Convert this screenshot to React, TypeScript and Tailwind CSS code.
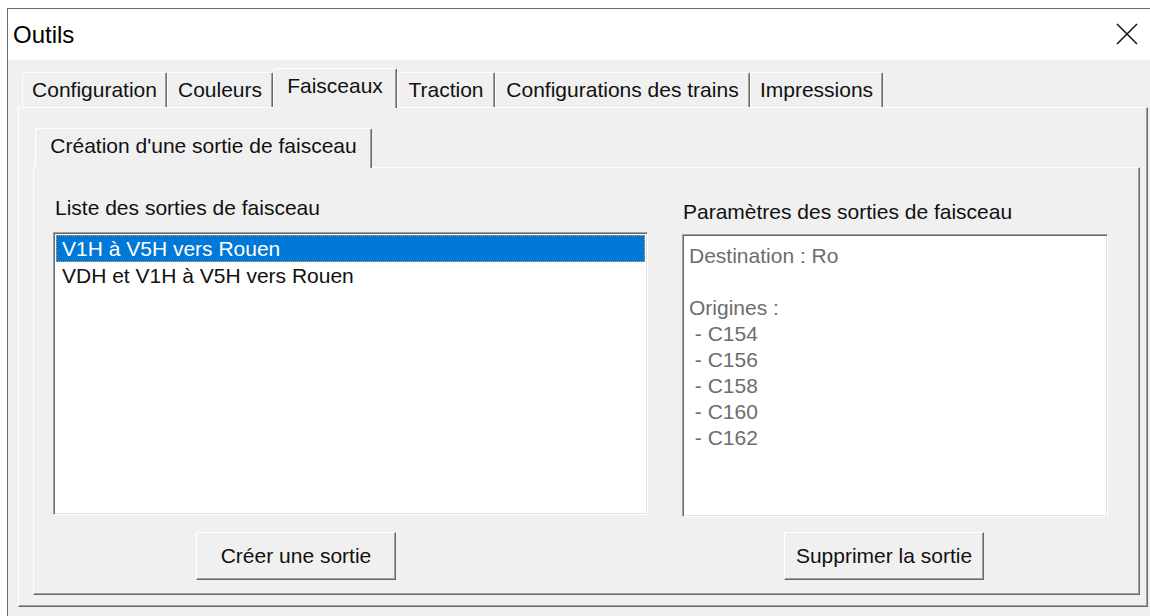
import React from 'react';
import clsx from 'clsx';

interface TabInfo {
  label: string;
  width: string;
  active?: boolean;
}

const tabs: TabInfo[] = [
  { label: 'Configuration', width: 'w-[145px]' },
  { label: 'Couleurs', width: 'w-[106px]' },
  { label: 'Faisceaux', width: 'w-[124px]', active: true },
  { label: 'Traction', width: 'w-[98px]' },
  { label: 'Configurations des trains', width: 'w-[255px]' },
  { label: 'Impressions', width: 'w-[133px]' },
];

const sorties = ['V1H à V5H vers Rouen', 'VDH et V1H à V5H vers Rouen'];

const parametres = ['Destination : Ro', '\u00a0', 'Origines :', ' - C154', ' - C156', ' - C158', ' - C160', ' - C162'];

// classic raised / sunken 3D edges
const raised =
  'border border-t-white border-l-white border-r-[#696969] border-b-[#696969] shadow-[inset_-1px_-1px_#a0a0a0]';
const sunken =
  'border border-t-[#a0a0a0] border-l-[#a0a0a0] border-r-white border-b-white shadow-[inset_1px_1px_#696969,inset_-1px_-1px_#e3e3e3]';

const Tab = ({ label, width, active }: TabInfo) => (
  <div
    className={clsx(
      width,
      'flex justify-center pt-[5px] text-[21px] leading-[24px] text-[#111] border-t border-l border-r border-t-white border-l-white border-r-[#696969] shadow-[inset_-1px_0_#a0a0a0] rounded-t-[2px]',
      active ? 'h-[40px] -mb-px relative z-10 bg-[#f0f0f0]' : 'h-[35px]'
    )}
  >
    {label}
  </div>
);

const Button = ({ label, offset }: { label: string; offset: string }) => (
  <button
    className={clsx(
      raised,
      offset,
      'w-[200px] h-[48px] bg-[#f0f0f0] text-[21px] leading-[24px] text-[#111] flex items-center justify-center'
    )}
  >
    {label}
  </button>
);

export default function App() {
  return (
    <div className="w-[1150px] h-[616px] bg-white pt-[8px] pl-[7px] overflow-hidden font-['Liberation_Sans',Arial,sans-serif]">
      <div className="h-full flex flex-col border-t border-l border-[#6b6b6b]">
        {/* Title bar */}
        <div className="h-[51px] shrink-0 flex items-center justify-between pl-[5px] pr-[12px] bg-white">
          <span className="text-[24px] leading-[28px] text-black">Outils</span>
          <svg width="22" height="22" viewBox="0 0 22 22" className="mt-[-2px]">
            <path d="M1 1 L21 21 M21 1 L1 21" stroke="#111" strokeWidth="1.5" fill="none" />
          </svg>
        </div>

        <div className="flex-1 bg-[#f0f0f0] pl-[10px] pt-[8px]">
          {/* Main tabs */}
          <div className="flex items-end h-[39px] pl-[4px]">
            {tabs.map(t => (
              <Tab key={t.label} {...t} />
            ))}
          </div>

          <div className={clsx(raised, 'w-[1130px] h-[500px] pt-[19px] pl-[14px] pr-[7px] pb-[11px] flex flex-col')}>
            {/* Sub tab */}
            <div className="flex items-end h-[40px] pl-[2px]">
              <Tab label="Création d'une sortie de faisceau" width="w-[337px]" active />
            </div>

            <div className={clsx(raised, 'flex-1 pl-[19px] grid grid-cols-[595px_426px] gap-x-[34px]')}>
              {/* Liste des sorties */}
              <div className="flex flex-col pt-[28px]">
                <div className="text-[21px] leading-[24px] text-[#111] pl-[2px]">Liste des sorties de faisceau</div>
                <div className={clsx(sunken, 'mt-[12px] h-[283px] bg-white p-[2px]')}>
                  {sorties.map((s, i) => (
                    <div
                      key={s}
                      className={clsx(
                        'h-[27px] pl-[5px] text-[21px] leading-[25px] whitespace-nowrap',
                        i === 0
                          ? 'bg-[#0078d7] text-white border border-dotted border-[#f59a3c]'
                          : 'text-[#111] border border-transparent'
                      )}
                    >
                      {s}
                    </div>
                  ))}
                </div>
                <div className="mt-[17px]">
                  <Button label="Créer une sortie" offset="ml-[143px]" />
                </div>
              </div>

              {/* Paramètres */}
              <div className="flex flex-col pt-[32px]">
                <div className="text-[21px] leading-[24px] text-[#111] pl-[1px]">Paramètres des sorties de faisceau</div>
                <div className={clsx(sunken, 'mt-[10px] h-[283px] bg-white pt-[8px] pl-[6px]')}>
                  {parametres.map((p, i) => (
                    <div key={i} className="text-[21px] leading-[26px] text-[#6d6d6d] whitespace-pre">
                      {p}
                    </div>
                  ))}
                </div>
                <div className="mt-[15px]">
                  <Button label="Supprimer la sortie" offset="ml-[102px]" />
                </div>
              </div>
            </div>
          </div>
        </div>
      </div>
    </div>
  );
}
